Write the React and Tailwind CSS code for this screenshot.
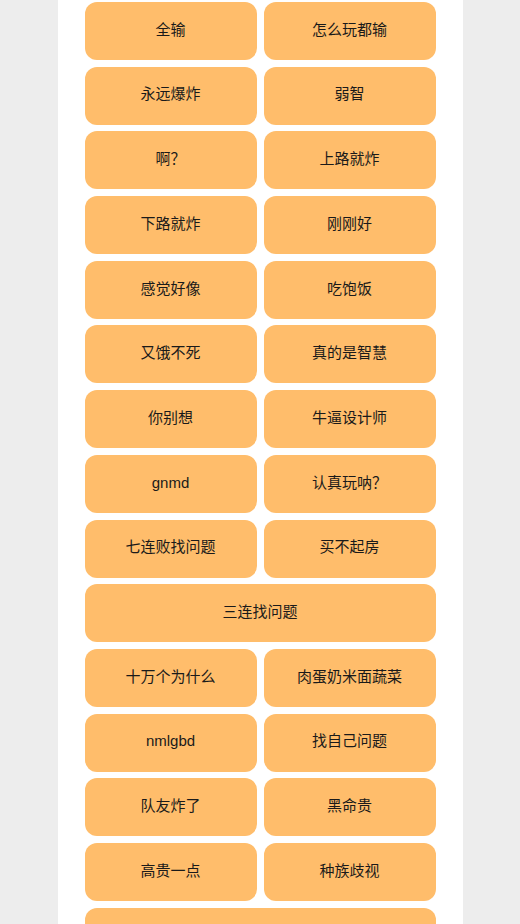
const items = [
  "全输", "怎么玩都输",
  "永远爆炸", "弱智",
  "啊？", "上路就炸",
  "下路就炸", "刚刚好",
  "感觉好像", "吃饱饭",
  "又饿不死", "真的是智慧",
  "你别想", "牛逼设计师",
  "gnmd", "认真玩呐？",
  "七连败找问题", "买不起房",
  { text: "三连找问题", wide: true },
  "十万个为什么", "肉蛋奶米面蔬菜",
  "nmlgbd", "找自己问题",
  "队友炸了", "黑命贵",
  "高贵一点", "种族歧视",
  { text: "", wide: true },
];

export default function App() {
  return (
    <div className="min-h-[924px] h-[924px] overflow-hidden bg-[#ededed] flex justify-center font-['Liberation_Sans','Noto_Sans_CJK_SC',sans-serif]">
      <div className="w-[405px] bg-white px-[27px] pt-[2px]">
        <div className="grid grid-cols-2 gap-x-[7px] gap-y-[6.7px]">
          {items.map((it, i) => {
            const wide = typeof it === "object";
            const text = wide ? it.text : it;
            return (
              <button
                key={i}
                type="button"
                className={`h-[58px] pb-[2px] rounded-[12px] bg-[#ffbd6b] text-[15px] text-[#1a1a1a] flex items-center justify-center ${
                  wide ? "col-span-2" : ""
                }`}
              >
                {text}
              </button>
            );
          })}
        </div>
      </div>
    </div>
  );
}
